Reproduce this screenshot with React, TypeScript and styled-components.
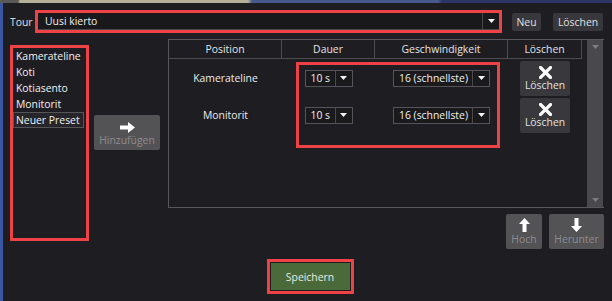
import React from 'react'
import styled, { createGlobalStyle } from 'styled-components'

const GlobalStyle = createGlobalStyle`
    html, body {
        margin: 0;
        padding: 0;
        background: #1e1d21;
    }
    body {
        font-family: 'Open Sans', 'Noto Sans', sans-serif;
        font-size: 10.4px;
        color: #e6e6e6;
        white-space: nowrap;
    }
`

const Desktop = styled.div`
    width: 612px;
    height: 301px;
    padding: 3px 0 0 3px;
    box-sizing: border-box;
    overflow: hidden;
    background:
        linear-gradient(to right, #5b5a58 0 18px, #b7b199 20px 248px, #48598e 252px 438px, #2c3565 442px) top / 100% 3px no-repeat,
        #3b56a3;
`

const Dialog = styled.div`
    height: 298px;
    background: #1e1d21;
    padding: 7px 0 0 7px;
    box-sizing: border-box;
    display: flex;
    flex-direction: column;
`

const Highlight = styled.div<{ $w: number; $h: number }>`
    width: ${(p) => p.$w}px;
    height: ${(p) => p.$h}px;
    border: 3px solid #ee4247;
    box-sizing: border-box;
    flex-shrink: 0;
`

const TopRow = styled.div`
    display: flex;
    align-items: center;
    height: 23px;
`

const Label = styled.span`
    width: 25px;
    color: #e4e4e4;
`

const TourSelect = styled.div`
    display: flex;
    height: 100%;
    background: #19181b;
    border-bottom: 1px solid #4a4a4c;
    box-sizing: border-box;
    span {
        flex: 1;
        padding-left: 7px;
        line-height: 16px;
        color: #f0f0f0;
    }
`

const ArrowCell = styled.div`
    width: 16px;
    border-left: 1px solid #4a4a4c;
    display: flex;
    align-items: center;
    justify-content: center;
`

const SmallButton = styled.div<{ $ml: number; $w: number }>`
    margin-left: ${(p) => p.$ml}px;
    width: ${(p) => p.$w}px;
    height: 18px;
    background: #38373b;
    border-radius: 2px;
    color: #e0e0e0;
    display: flex;
    align-items: center;
    justify-content: center;
`

const Main = styled.div`
    display: flex;
    margin-top: 6px;
`

const PresetList = styled(Highlight)`
    margin-top: 6px;
    display: flex;
    flex-direction: column;
`

const PresetItem = styled.div<{ $selected?: boolean }>`
    height: 16px;
    width: 71px;
    line-height: 14px;
    padding-left: 2px;
    box-sizing: border-box;
    color: #f2f2f2;
    border: 1px solid ${(p) => (p.$selected ? '#56555a' : 'transparent')};
    background: ${(p) => (p.$selected ? '#26252a' : 'transparent')};
`

const IconButton = styled.div<{ $w: number; $tone: 'gray' | 'dark' }>`
    width: ${(p) => p.$w}px;
    height: 35px;
    box-sizing: border-box;
    border-radius: 2px;
    background: ${(p) => (p.$tone === 'gray' ? '#535255' : '#39383c')};
    color: ${(p) => (p.$tone === 'gray' ? '#8d8c90' : '#e2e2e2')};
    display: flex;
    flex-direction: column;
    align-items: center;
    justify-content: flex-end;
    padding-bottom: 3px;
    gap: 1px;
    line-height: 13px;
    flex-shrink: 0;
`

const AddButton = styled(IconButton)`
    margin: 76px 0 0 5px;
`

const RightColumn = styled.div`
    margin-left: 8px;
    width: 436px;
    display: flex;
    flex-direction: column;
`

const Table = styled.div`
    position: relative;
    height: 169px;
    border: 1px solid #58575b;
    border-right: none;
    box-sizing: border-box;
    display: grid;
    grid-template-columns: 113px 93px 133px 74px 1fr;
    grid-template-rows: 19px 38px 36px 1fr;
`

const HeadCell = styled.div`
    border-right: 1px solid #4d4c50;
    border-bottom: 1px solid #4d4c50;
    display: flex;
    align-items: center;
    justify-content: center;
    color: #e4e4e4;
`

const Cell = styled.div<{ $top?: number }>`
    display: flex;
    justify-content: center;
    align-items: ${(p) => (p.$top !== undefined ? 'flex-start' : 'center')};
    padding-top: ${(p) => p.$top ?? 0}px;
    color: #ececec;
`

const DeleteButton = styled(IconButton)`
    width: 50px;
    justify-content: center;
    padding-bottom: 0;
    gap: 0;
`

const Scrollbar = styled.div`
    grid-column: 5;
    grid-row: 1 / -1;
    margin-left: 5px;
    width: 16px;
    background: #49484c;
    display: flex;
    flex-direction: column;
    justify-content: space-between;
    align-items: center;
    padding: 5px 0;
    box-sizing: border-box;
`

const Select = styled.div<{ $w: number }>`
    width: ${(p) => p.$w}px;
    height: 17px;
    display: flex;
    box-sizing: border-box;
    border: 1px solid #55545a;
    background: #1a191c;
    span {
        flex: 1;
        padding-left: 5px;
        line-height: 15px;
        color: #f0f0f0;
    }
`

const SelectMark = styled(Highlight)`
    position: absolute;
    left: 127px;
    top: 22px;
`

const MoveRow = styled.div`
    display: flex;
    justify-content: flex-end;
    gap: 7px;
    margin-top: 6px;
`

const Footer = styled.div`
    display: flex;
    justify-content: center;
    margin-top: 10px;
    padding-right: 2px;
`

const SaveButton = styled.div`
    margin: 1px;
    height: 27px;
    background: #4b6a3a;
    color: #e6ebe2;
    display: flex;
    align-items: center;
    justify-content: center;
`

const Caret = ({ color = '#f4f4f4' }: { color?: string }) => (
    <svg width="7" height="4" viewBox="0 0 7 4">
        <path d="M0 0h7L3.5 4z" fill={color} />
    </svg>
)

const ArrowRight = () => (
    <svg width="15" height="11" viewBox="0 0 15 11">
        <path d="M0 3.5h8V0l7 5.5-7 5.5V7.5H0z" fill="#fff" />
    </svg>
)

const ArrowUp = () => (
    <svg width="11" height="14" viewBox="0 0 11 14">
        <path d="M5.5 0L11 6H7.5v8h-4V6H0z" fill="#fff" />
    </svg>
)

const ArrowDown = () => (
    <svg width="11" height="14" viewBox="0 0 11 14">
        <path d="M3.5 0h4v8H11l-5.5 6L0 8h3.5z" fill="#fff" />
    </svg>
)

const Cross = () => (
    <svg width="13" height="13" viewBox="0 0 13 13">
        <path d="M1.5 1.5l10 10M11.5 1.5l-10 10" stroke="#fff" strokeWidth="3.2" strokeLinecap="square" />
    </svg>
)

const presets = ['Kamerateline', 'Koti', 'Kotiasento', 'Monitorit', 'Neuer Preset']
const steps = [
    { name: 'Kamerateline', row: 2 },
    { name: 'Monitorit', row: 3 },
]

const App = () => {
    return (
        <Desktop>
            <GlobalStyle />
            <Dialog>
                <TopRow>
                    <Label>Tour</Label>
                    <Highlight $w={467} $h={23}>
                        <TourSelect>
                            <span>Uusi kierto</span>
                            <ArrowCell>
                                <Caret />
                            </ArrowCell>
                        </TourSelect>
                    </Highlight>
                    <SmallButton $ml={10} $w={29}>Neu</SmallButton>
                    <SmallButton $ml={12} $w={50}>Löschen</SmallButton>
                </TopRow>
                <Main>
                    <PresetList $w={79} $h={196}>
                        {presets.map((p, i) => (
                            <PresetItem key={p} $selected={i === presets.length - 1}>
                                {p}
                            </PresetItem>
                        ))}
                    </PresetList>
                    <AddButton $w={66} $tone="gray">
                        <ArrowRight />
                        Hinzufügen
                    </AddButton>
                    <RightColumn>
                        <Table>
                            <HeadCell>Position</HeadCell>
                            <HeadCell>Dauer</HeadCell>
                            <HeadCell>Geschwindigkeit</HeadCell>
                            <HeadCell>Löschen</HeadCell>
                            {steps.map((s) => (
                                <React.Fragment key={s.name}>
                                    <Cell style={{ gridRow: s.row }}>{s.name}</Cell>
                                    <Cell style={{ gridRow: s.row }}>
                                        <Select $w={48}>
                                            <span>10 s</span>
                                            <ArrowCell>
                                                <Caret />
                                            </ArrowCell>
                                        </Select>
                                    </Cell>
                                    <Cell style={{ gridRow: s.row }}>
                                        <Select $w={97}>
                                            <span>16 (schnellste)</span>
                                            <ArrowCell>
                                                <Caret />
                                            </ArrowCell>
                                        </Select>
                                    </Cell>
                                    <Cell style={{ gridRow: s.row }} $top={s.row === 2 ? 2 : 1}>
                                        <DeleteButton $w={50} $tone="dark">
                                            <Cross />
                                            Löschen
                                        </DeleteButton>
                                    </Cell>
                                </React.Fragment>
                            ))}
                            <Scrollbar>
                                <Caret color="#7d7c80" />
                                <Caret color="#7d7c80" />
                            </Scrollbar>
                            <SelectMark $w={204} $h={86} />
                        </Table>
                        <MoveRow>
                            <IconButton $w={36} $tone="gray">
                                <ArrowUp />
                                Hoch
                            </IconButton>
                            <IconButton $w={55} $tone="gray">
                                <ArrowDown />
                                Herunter
                            </IconButton>
                        </MoveRow>
                    </RightColumn>
                </Main>
                <Footer>
                    <Highlight $w={87} $h={35}>
                        <SaveButton>Speichern</SaveButton>
                    </Highlight>
                </Footer>
            </Dialog>
        </Desktop>
    )
}

export default App
